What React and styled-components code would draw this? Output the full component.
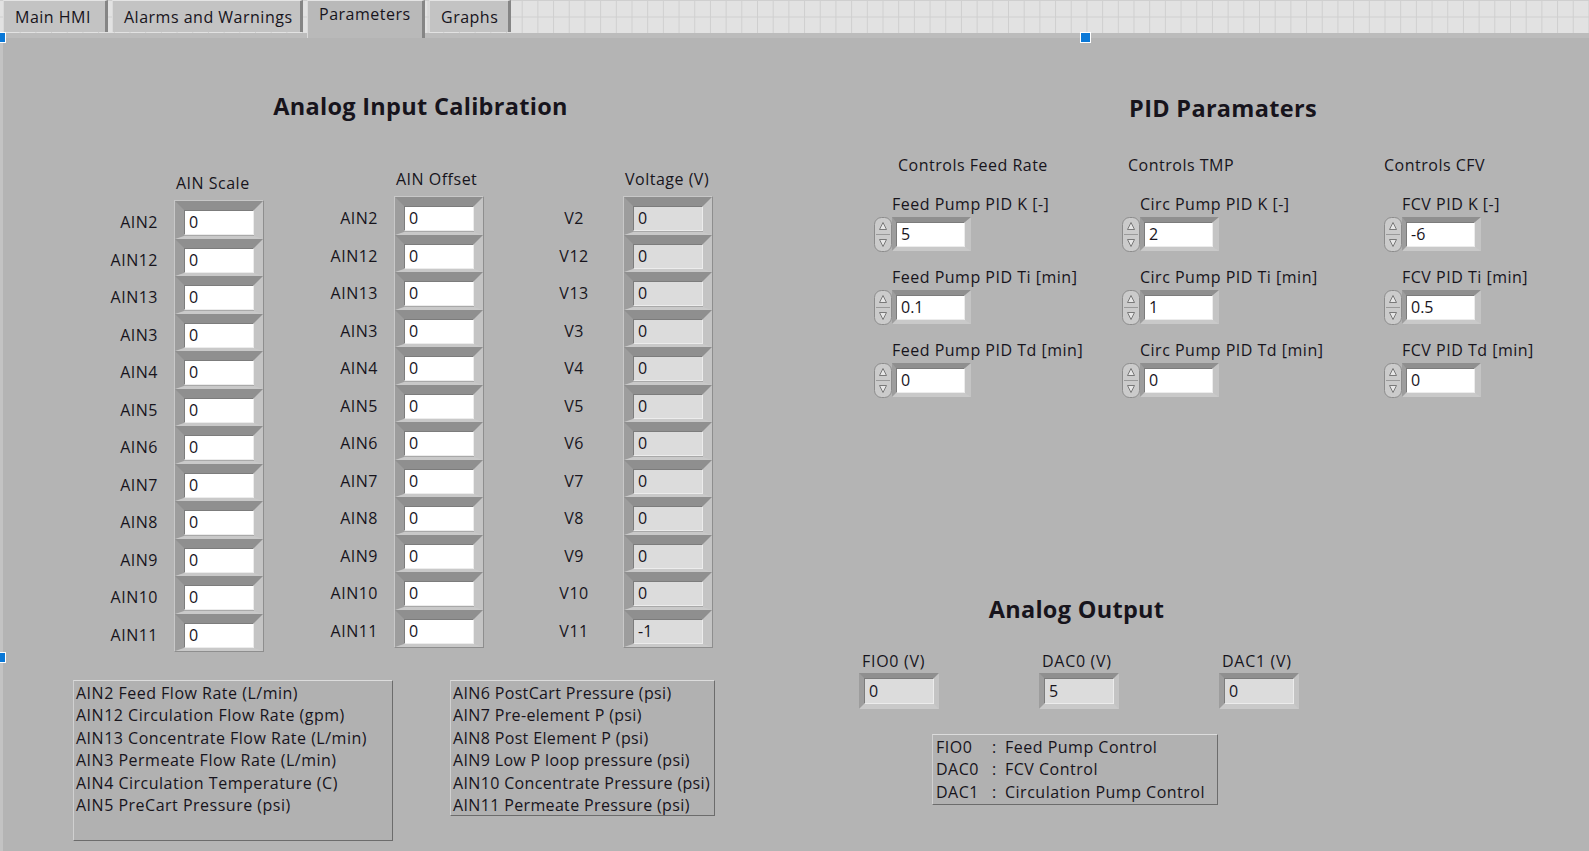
import React from 'react';
import styled, { createGlobalStyle } from 'styled-components';

const GlobalStyle = createGlobalStyle`
    body {
        margin: 0;
        overflow: hidden;
        background: #b4b4b4;
    }
`;

const Page = styled.div`
    position: relative;
    width: 1589px;
    height: 851px;
    overflow: hidden;
    background: #b4b4b4;
    color: #17141c;
    font-family: 'Open Sans', 'Noto Sans', sans-serif;
    font-size: 16px;
    letter-spacing: 0.5px;
`;

const TabBar = styled.div`
    display: flex;
    align-items: flex-start;
    gap: 4px;
    height: 33px;
    padding-left: 3px;
    background-color: #e2e2e2;
    background-image:
        linear-gradient(#cfcfcf 1px, transparent 1px),
        linear-gradient(90deg, #cfcfcf 1px, transparent 1px);
    background-size: 15.7px 16.5px;
    background-position: 0 0, 4px 0;
`;

const Tab = styled.div`
    position: relative;
    z-index: 1;
    box-sizing: border-box;
    width: ${p => p.$w}px;
    height: ${p => (p.$active ? 38 : 32)}px;
    margin-bottom: ${p => (p.$active ? -5 : 0)}px;
    padding: ${p => (p.$active ? '2px' : '0')} 0 0 11px;
    display: flex;
    align-items: ${p => (p.$active ? 'flex-start' : 'center')};
    background: ${p => (p.$active ? '#b9b9b9' : '#c3c3c3')};
    border-top: 1px solid #e4e4e4;
    border-left: 1px solid #dadada;
    border-right: 3px solid #858585;
    white-space: nowrap;
    letter-spacing: 0.5px;
`;

const Panel = styled.div`
    display: flex;
    height: 818px;
    box-sizing: border-box;
    border-top: 5px solid #bcbcbc;
    border-left: 3px solid #c3c3c3;
`;

const LeftSection = styled.div`
    width: 835px;
    flex-shrink: 0;
    padding-top: 53px;
`;

const RightSection = styled.div`
    display: flex;
    flex-direction: column;
    padding-top: 55px;
`;

const Heading = styled.h2`
    margin: 0;
    width: ${p => (p.$w ? `${p.$w}px` : 'auto')};
    font-size: 23.5px;
    font-weight: 700;
    line-height: 30px;
    text-align: center;
    letter-spacing: 0.3px;
`;

const GroupsRow = styled.div`
    display: flex;
    align-items: flex-start;
    gap: 54px;
    margin-top: 48px;
    padding-left: 95px;
`;

const Group = styled.div`
    display: grid;
    grid-template-columns: ${p => p.$labelW}px auto;
    column-gap: ${p => p.$gap}px;
    margin-top: ${p => p.$drop || 0}px;
`;

const GroupHeader = styled.div`
    grid-column: 2;
    height: 20px;
    line-height: 20px;
    margin-bottom: 7px;
    padding-left: 2px;
    white-space: nowrap;
`;

const LabelColumn = styled.div`
    grid-column: 1;
    grid-row: 2;
    padding-top: 1px;
`;

const RowLabel = styled.div`
    box-sizing: border-box;
    height: 37.5px;
    padding-top: 9px;
    line-height: 25px;
    text-align: ${p => p.$align || 'right'};
    white-space: nowrap;
`;

const ArrayFrame = styled.div`
    grid-column: 2;
    grid-row: 2;
    border: 1px solid;
    border-color: #c8c8c8 #8e8e8e #8e8e8e #c8c8c8;
    background: #a9a9a9;
`;

const Cell = styled.div`
    box-sizing: border-box;
    height: 37.5px;
    border-style: solid;
    border-width: 9px 9px 3.5px 9px;
    border-color: #8f8f8f #c4c4c4 #c9c9c9 #9d9d9d;
`;

const Field = styled.div`
    box-sizing: border-box;
    width: ${p => p.$w || 70}px;
    height: ${p => p.$h || 25}px;
    padding-left: 4px;
    line-height: ${p => (p.$h || 25) - 2}px;
    background: ${p => (p.$indicator ? '#dcdcdc' : '#ffffff')};
    border: 1px solid;
    border-color: #7c7c7c #ececec #ececec #7c7c7c;
    letter-spacing: 0;
`;

const NotesRow = styled.div`
    display: flex;
    align-items: flex-start;
    gap: 57px;
    margin-top: 28px;
    padding-left: 70px;
`;

const NoteBox = styled.div`
    box-sizing: border-box;
    width: ${p => p.$w}px;
    height: ${p => p.$h}px;
    padding: 1px 2px 0;
    line-height: 22.4px;
    letter-spacing: ${p => p.$spacing || 0.5}px;
    background: #b1b1b1;
    border: 1px solid;
    border-color: #dcdcdc #6c6c6c #6c6c6c #d0d0d0;
    white-space: nowrap;
    overflow: hidden;
`;

const PidBlock = styled.div`
    padding-left: 36px;
`;

const PidColumns = styled.div`
    display: flex;
    margin-top: 32px;
`;

const PidColumn = styled.div`
    width: ${p => p.$w}px;
    margin-top: ${p => p.$lift ? -p.$lift : 0}px;
`;

const ColumnTitle = styled.div`
    padding-left: ${p => p.$indent}px;
    margin-top: ${p => p.$lift || 0}px;
    line-height: 20px;
    margin-bottom: 19px;
    white-space: nowrap;
`;

const PidRow = styled.div`
    margin-bottom: 15px;
`;

const PidLabel = styled.div`
    padding-left: 18px;
    line-height: 20px;
    margin-bottom: 3px;
    white-space: nowrap;
`;

const Numeric = styled.div`
    display: flex;
    align-items: flex-start;
`;

const NumericFrame = styled.div`
    border-style: solid;
    border-width: 5.5px 6px 4.5px 4px;
    border-color: #8f8f8f #c4c4c4 #c9c9c9 #9d9d9d;
`;

const AnalogBlock = styled.div`
    padding-left: 21px;
    margin-top: 181px;
`;

const OutputsRow = styled.div`
    display: grid;
    grid-template-columns: 180px 180px 180px;
    margin-top: 27px;
`;

const OutputLabel = styled.div`
    line-height: 20px;
    margin-bottom: 1.5px;
    padding-left: 3px;
    letter-spacing: 0.7px;
    white-space: nowrap;
`;

const OutputFrame = styled.div`
    display: inline-block;
    border: 5px solid;
    border-color: #8f8f8f #c4c4c4 #c9c9c9 #9d9d9d;
`;

const Legend = styled.div`
    box-sizing: border-box;
    display: grid;
    grid-template-columns: 56px 13px auto;
    width: 286px;
    height: 71px;
    margin: 25px 0 0 73px;
    padding: 1px 0 0 3px;
    line-height: 22.2px;
    background: #b1b1b1;
    border: 1px solid;
    border-color: #dcdcdc #6c6c6c #6c6c6c #d0d0d0;
    white-space: nowrap;
`;

const Handle = styled.div`
    position: absolute;
    left: ${p => p.$x}px;
    top: ${p => p.$y}px;
    width: 9px;
    height: 9px;
    background: #0a78d7;
    border: 1px solid #ffffff;
    z-index: 5;
`;

function Spinner() {
    return (
        <svg width="18" height="35" viewBox="0 0 18 35">
            <rect x="0.5" y="0.5" width="17" height="34" rx="7" fill="#cbcbcb" stroke="#8c8c8c" />
            <line x1="2" y1="17.5" x2="16" y2="17.5" stroke="#9a9a9a" />
            <path d="M5.5 12.5 L9 5.5 L12.5 12.5 Z" fill="#e6e6e6" stroke="#6e6e6e" strokeWidth="0.9" />
            <path d="M5.5 22.5 L12.5 22.5 L9 29.5 Z" fill="#e6e6e6" stroke="#6e6e6e" strokeWidth="0.9" />
        </svg>
    );
}

const rows = ['2', '12', '13', '3', '4', '5', '6', '7', '8', '9', '10', '11'];
const voltages = ['0', '0', '0', '0', '0', '0', '0', '0', '0', '0', '0', '-1'];

function ArrayGroup({ title, prefix, values, indicator, labelW, gap, drop, align }) {
    return (
        <Group $labelW={labelW} $gap={gap} $drop={drop}>
            <GroupHeader>{title}</GroupHeader>
            <LabelColumn>
                {rows.map(r => (
                    <RowLabel key={r} $align={align}>{prefix}{r}</RowLabel>
                ))}
            </LabelColumn>
            <ArrayFrame>
                {rows.map((r, i) => (
                    <Cell key={r}>
                        <Field $indicator={indicator}>{values ? values[i] : '0'}</Field>
                    </Cell>
                ))}
            </ArrayFrame>
        </Group>
    );
}

function PidControl({ label, value }) {
    return (
        <PidRow>
            <PidLabel>{label}</PidLabel>
            <Numeric>
                <Spinner />
                <NumericFrame>
                    <Field $w={69}>{value}</Field>
                </NumericFrame>
            </Numeric>
        </PidRow>
    );
}

const pidColumns = [
    { title: 'Controls Feed Rate', w: 248, indent: 24, name: 'Feed Pump', values: ['5', '0.1', '0'] },
    { title: 'Controls TMP', w: 262, indent: 6, name: 'Circ Pump', values: ['2', '1', '0'], lift: 2 },
    { title: 'Controls CFV', w: 200, indent: 0, name: 'FCV', values: ['-6', '0.5', '0'] },
];

const outputs = [
    { label: 'FIO0 (V)', value: '0' },
    { label: 'DAC0 (V)', value: '5' },
    { label: 'DAC1 (V)', value: '0' },
];

const legend = [
    ['FIO0', 'Feed Pump Control'],
    ['DAC0', 'FCV Control'],
    ['DAC1', 'Circulation Pump Control'],
];

export default function App() {
    return (
        <Page>
            <GlobalStyle />
            <TabBar>
                <Tab $w={105}>Main HMI</Tab>
                <Tab $w={191}>Alarms and Warnings</Tab>
                <Tab $w={118} $active>Parameters</Tab>
                <Tab $w={82}>Graphs</Tab>
            </TabBar>
            <Panel>
                <LeftSection>
                    <Heading>Analog Input Calibration</Heading>
                    <GroupsRow>
                        <ArrayGroup title="AIN Scale" prefix="AIN" labelW={60} gap={16} drop={4} />
                        <ArrayGroup title="AIN Offset" prefix="AIN" labelW={60} gap={16} />
                        <ArrayGroup title="Voltage (V)" prefix="V" labelW={72} gap={13} align="center" values={voltages} indicator />
                    </GroupsRow>
                    <NotesRow>
                        <NoteBox $w={320} $h={161}>
                            <div>AIN2 Feed Flow Rate (L/min)</div>
                            <div>AIN12 Circulation Flow Rate (gpm)</div>
                            <div>AIN13 Concentrate Flow Rate (L/min)</div>
                            <div>AIN3 Permeate Flow Rate (L/min)</div>
                            <div>AIN4 Circulation Temperature (C)</div>
                            <div>AIN5 PreCart Pressure (psi)</div>
                        </NoteBox>
                        <NoteBox $w={265} $h={136} $spacing={0.35}>
                            <div>AIN6 PostCart Pressure (psi)</div>
                            <div>AIN7 Pre-element P (psi)</div>
                            <div>AIN8 Post Element P (psi)</div>
                            <div>AIN9 Low P loop pressure (psi)</div>
                            <div>AIN10 Concentrate Pressure (psi)</div>
                            <div>AIN11 Permeate Pressure (psi)</div>
                        </NoteBox>
                    </NotesRow>
                </LeftSection>
                <RightSection>
                    <PidBlock>
                        <Heading $w={698}>PID Paramaters</Heading>
                        <PidColumns>
                            {pidColumns.map(col => (
                                <PidColumn key={col.title} $w={col.w} $lift={col.lift}>
                                    <ColumnTitle $indent={col.indent} $lift={col.lift}>{col.title}</ColumnTitle>
                                    <PidControl label={`${col.name} PID K [-]`} value={col.values[0]} />
                                    <PidControl label={`${col.name} PID Ti [min]`} value={col.values[1]} />
                                    <PidControl label={`${col.name} PID Td [min]`} value={col.values[2]} />
                                </PidColumn>
                            ))}
                        </PidColumns>
                    </PidBlock>
                    <AnalogBlock>
                        <Heading $w={435}>Analog Output</Heading>
                        <OutputsRow>
                            {outputs.map(o => (
                                <div key={o.label}>
                                    <OutputLabel>{o.label}</OutputLabel>
                                    <OutputFrame>
                                        <Field $indicator $h={26}>{o.value}</Field>
                                    </OutputFrame>
                                </div>
                            ))}
                        </OutputsRow>
                        <Legend>
                            {legend.map(([name, text]) => (
                                <React.Fragment key={name}>
                                    <span>{name}</span>
                                    <span>:</span>
                                    <span>{text}</span>
                                </React.Fragment>
                            ))}
                        </Legend>
                    </AnalogBlock>
                </RightSection>
            </Panel>
            <Handle $x={-5} $y={32} />
            <Handle $x={1080} $y={32} />
            <Handle $x={-5} $y={652} />
        </Page>
    );
}
